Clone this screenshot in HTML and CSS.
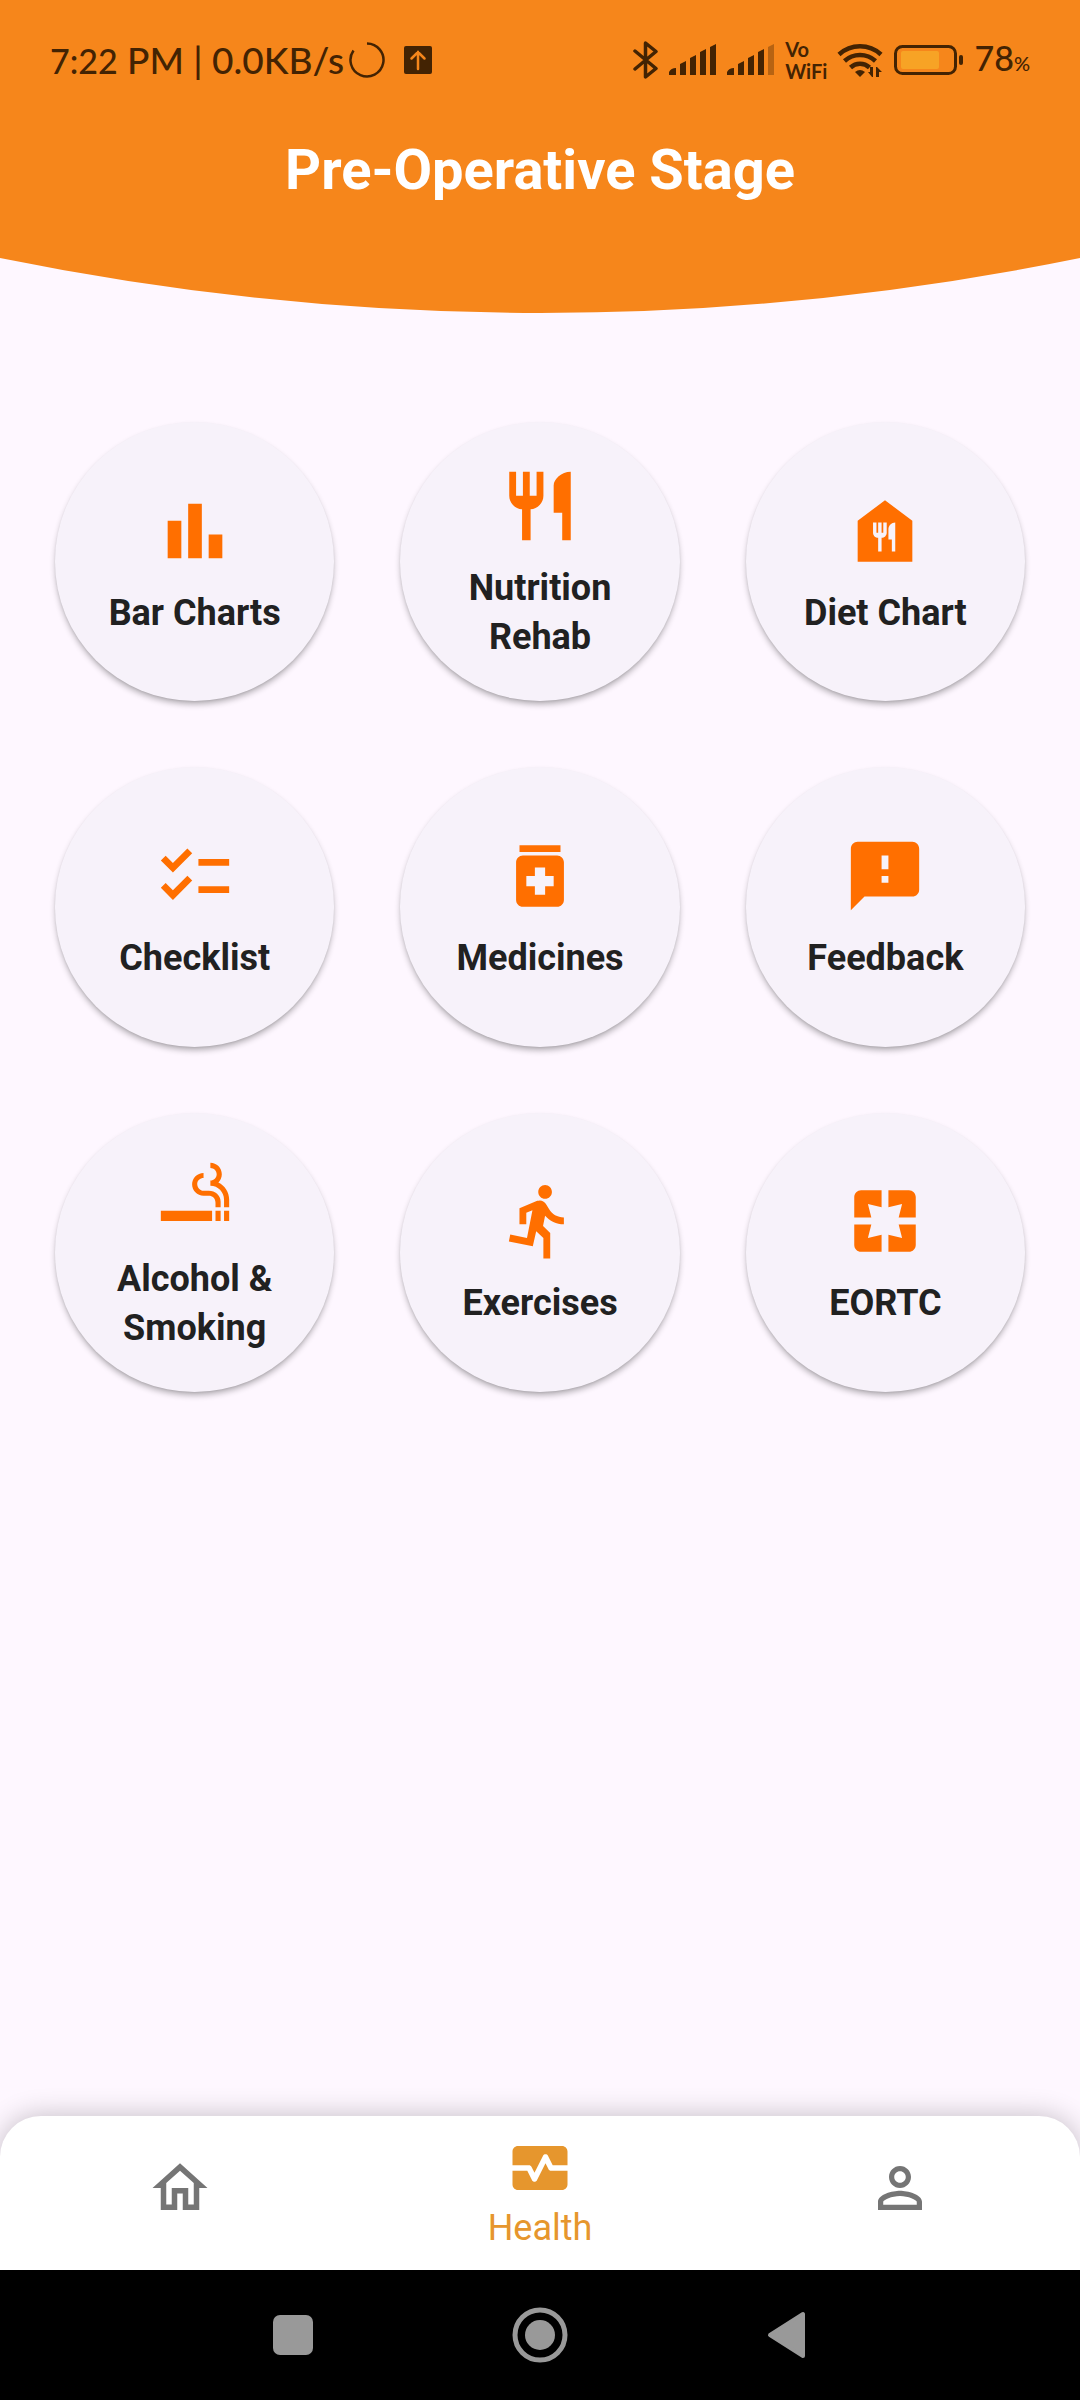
FILE: index.html
```html
<!DOCTYPE html>
<html lang="en">
<head>
<meta charset="utf-8">
<meta name="viewport" content="width=device-width, initial-scale=1">
<title>Pre-Operative Stage</title>
<link rel="stylesheet" href="styles.css">
</head>
<body>
<header class="header">
  <div class="status">
    <div class="status-group">
      <span class="clock"><span class="clock-time">7:22</span> PM | 0.0KB/s</span>
      <svg class="spinner" width="38" height="38" viewBox="0 0 38 38" aria-hidden="true"><path d="M19 2.5A16.5 16.5 0 1 1 5.5 9.5" fill="none" stroke="currentColor" stroke-width="2.5"/></svg>
      <svg class="upload" width="28" height="28" viewBox="0 0 28 28" aria-hidden="true"><rect width="28" height="28" rx="2" fill="currentColor"/><path d="M14 23V6M7.500 12.500 14 6l6.500 6.500" fill="none" stroke="#f6861b" stroke-width="2.500" stroke-linecap="round"/></svg>
    </div>
    <div class="status-group status-right">
      <svg width="26" height="40" viewBox="0 0 26 40" aria-hidden="true"><path d="M2 11l21 17.500L12.500 37V3L23 11.500 2 29" fill="none" stroke="currentColor" stroke-width="3.500" stroke-linejoin="round" stroke-linecap="round"/></svg>
      <svg class="signal" width="48" height="32" viewBox="0 0 48 32" aria-hidden="true"><g fill="currentColor"><path d="M0 31v-3q2-4 7-4v7zM11 31V20l6-3v14zM21 31V14l6-3v20zM31 31V8l6-3v26zM41 31V3l6-3v31z"/></g></svg>
      <svg class="signal" width="48" height="32" viewBox="0 0 48 32" aria-hidden="true"><g fill="currentColor"><path d="M0 31v-3q2-4 7-4v7zM11 31V20l6-3v14zM21 31V14l6-3v20zM31 31V8l6-3v26z"/><path d="M41 31V3l6-3v31z" opacity=".35"/></g></svg>
      <span class="vowifi"><span>Vo</span><span>WiFi</span></span>
      <svg class="wifi" width="47" height="36" viewBox="0 0 47 36" aria-hidden="true"><g fill="none" stroke="currentColor" stroke-width="4.500"><path d="M2 12.500a31 31 0 0 1 42 0M7.500 19a23 23 0 0 1 31 0M13.500 25.500a14 14 0 0 1 19 0"/></g><path d="M18 30q5-4 10 0l-5 5z" fill="currentColor"/><path d="M31 30h2v-5h3v10h-1zM39 35V25h1l5 5h-3v5z" fill="currentColor"/></svg>
      <svg class="battery" width="70" height="30" viewBox="0 0 70 30" aria-hidden="true"><rect x="1.500" y="1.500" width="60" height="27" rx="7" fill="none" stroke="currentColor" stroke-width="3"/><rect x="7" y="6" width="38" height="18" rx="2" fill="#f7a325"/><rect x="65" y="10" width="4" height="10" rx="2" fill="currentColor"/></svg>
      <span class="level">78<small>%</small></span>
    </div>
  </div>
  <h1 class="title">Pre-Operative Stage</h1>
</header>
<svg class="curve" viewBox="0 0 1080 55" preserveAspectRatio="none" aria-hidden="true"><path d="M0 0Q540 110 1080 0z" fill="#f6861b"/></svg>

<main class="grid">
  <button class="card" type="button">
    <svg class="icon" viewBox="0 0 24 24" aria-hidden="true"><path d="M4 9h4v11H4zm12 4h4v7h-4zm-6-9h4v16h-4z"/></svg>
    <span>Bar Charts</span>
  </button>
  <button class="card" type="button">
    <svg class="icon" viewBox="0 0 24 24" aria-hidden="true"><path d="M11 9H9V2H7v7H5V2H3v7c0 2.120 1.660 3.840 3.750 3.970V22h2.500v-9.030C11.340 12.840 13 11.120 13 9V2h-2v7zm5-3v8h2.500v8H21V2c-2.760 0-5 2.240-5 4z"/></svg>
    <span>Nutrition Rehab</span>
  </button>
  <button class="card" type="button">
    <svg class="icon" viewBox="0 0 24 24" aria-hidden="true"><path d="M12 3L4 9v12h16V9l-8-6zm.5 9.500c0 .83-.67 1.500-1.500 1.500v4h-1v-4c-.83 0-1.500-.67-1.500-1.500v-3h1v3h.5v-3h1v3h.5v-3h1v3zM15 18h-1v-3.500h-1v-3c0-1.100.9-2 2-2V18z"/></svg>
    <span>Diet Chart</span>
  </button>
  <button class="card" type="button">
    <svg class="icon" viewBox="0 0 24 24" aria-hidden="true"><path d="M22 7h-9v2h9V7zm0 8h-9v2h9v-2zM5.540 11L2 7.460l1.410-1.410 2.120 2.120 4.240-4.240 1.410 1.410L5.540 11zm0 8L2 15.460l1.410-1.410 2.120 2.120 4.240-4.240 1.410 1.410L5.540 19z"/></svg>
    <span>Checklist</span>
  </button>
  <button class="card" type="button">
    <svg class="icon" viewBox="0 0 24 24" aria-hidden="true"><path d="M6 3h12v2H6zm11 3H7c-1.100 0-2 .9-2 2v11c0 1.100.9 2 2 2h10c1.100 0 2-.9 2-2V8c0-1.100-.9-2-2-2zm-1 9h-2.500v2.500h-3V15H8v-3h2.500V9.500h3V12H16v3z"/></svg>
    <span>Medicines</span>
  </button>
  <button class="card" type="button">
    <svg class="icon" viewBox="0 0 24 24" aria-hidden="true"><path d="M20 2H4c-1.100 0-1.990.9-1.990 2L2 22l4-4h14c1.100 0 2-.9 2-2V4c0-1.100-.9-2-2-2zm-7 12h-2v-2h2v2zm0-4h-2V6h2v4z"/></svg>
    <span>Feedback</span>
  </button>
  <button class="card" type="button">
    <svg class="icon" viewBox="0 0 24 24" aria-hidden="true"><path d="M2 16h15v3H2zm18.500 0H22v3h-1.500zM18 16h1.500v3H18zm.85-8.270c.62-.61 1-1.450 1-2.380C19.850 3.500 18.350 2 16.500 2v1.500c1.020 0 1.850.83 1.850 1.850S17.520 7.200 16.500 7.200v1.500c2.240 0 4 1.830 4 4.070V15H22v-2.240c0-2.220-1.280-4.140-3.150-5.030zm-2.820 2.470H14.500c-1.020 0-1.850-.98-1.850-2s.83-1.750 1.850-1.750v-1.500c-1.850 0-3.350 1.500-3.350 3.350s1.500 3.350 3.350 3.350h1.530c1.050 0 1.970.74 1.970 2.050V15h1.500v-1.640c0-1.810-1.600-3.160-3.470-3.160z"/></svg>
    <span>Alcohol &amp; Smoking</span>
  </button>
  <button class="card" type="button">
    <svg class="icon" viewBox="0 0 24 24" aria-hidden="true"><path d="M13.490 5.480c1.100 0 2-.9 2-2s-.9-2-2-2-2 .9-2 2 .9 2 2 2zm-3.600 13.900l1-4.400 2.100 2v6h2v-7.500l-2.100-2 .6-3c1.300 1.500 3.300 2.500 5.500 2.500v-2c-1.900 0-3.500-1-4.300-2.400l-1-1.600c-.4-.6-1-1-1.700-1-.3 0-.5.1-.8.1l-5.200 2.200v4.700h2v-3.400l1.800-.7-1.600 8.100-4.900-1-.4 2 7 1.400z"/></svg>
    <span>Exercises</span>
  </button>
  <button class="card" type="button">
    <svg class="icon" viewBox="0 0 24 24" aria-hidden="true"><path d="M3 5v6h5L7 7l4 1V3H5c-1.100 0-2 .9-2 2zm5 8H3v6c0 1.100.9 2 2 2h6v-5l-4 1 1-4zm9 4l-4-1v5h6c1.100 0 2-.9 2-2v-6h-5l1 4zm2-14h-6v5l4-1-1 4h5V5c0-1.100-.9-2-2-2z"/></svg>
    <span>EORTC</span>
  </button>
</main>

<nav class="tabs" aria-label="Main">
  <a class="tab" href="#home" aria-label="Home">
    <svg class="tab-icon" viewBox="0 0 24 24" aria-hidden="true"><path d="M12 5.690l5 4.500V18h-2v-6H9v6H7v-7.810l5-4.500M12 3L2 12h3v8h6v-6h2v6h6v-8h3L12 3z"/></svg>
  </a>
  <a class="tab tab-active" href="#health" aria-current="page">
    <svg class="tab-icon" viewBox="0 0 24 24" aria-hidden="true"><path d="M15.110 12.450 14 10.240l-3.110 6.210c-.16.34-.51.55-.89.55s-.73-.21-.89-.55L7.380 13H2v5c0 1.100.9 2 2 2h16c1.100 0 2-.9 2-2v-5h-6c-.38 0-.73-.21-.89-.55zM20 4H4c-1.100 0-2 .9-2 2v5h6c.38 0 .73.21.89.55L10 13.760l3.110-6.210c.34-.68 1.450-.68 1.790 0L16.620 11H22V6c0-1.100-.9-2-2-2z"/></svg>
    <span>Health</span>
  </a>
  <a class="tab" href="#profile" aria-label="Profile">
    <svg class="tab-icon" viewBox="0 0 24 24" aria-hidden="true"><path d="M12 5.900c1.160 0 2.100.94 2.100 2.100s-.94 2.100-2.100 2.100S9.900 9.160 9.900 8s.94-2.100 2.100-2.100m0 9c2.970 0 6.100 1.460 6.100 2.100v1.100H5.900V17c0-.64 3.130-2.100 6.100-2.100M12 4C9.790 4 8 5.790 8 8s1.790 4 4 4 4-1.790 4-4-1.790-4-4-4zm0 9c-2.670 0-8 1.340-8 4v3h16v-3c0-2.660-5.330-4-8-4z"/></svg>
  </a>
</nav>

<div class="system">
  <button type="button" aria-label="Recent apps"><svg width="56" height="56" viewBox="0 0 56 56" aria-hidden="true"><rect x="8" y="8" width="40" height="40" rx="7"/></svg></button>
  <button type="button" aria-label="Home screen"><svg width="56" height="56" viewBox="0 0 56 56" aria-hidden="true"><circle cx="28" cy="28" r="15"/><circle cx="28" cy="28" r="25" fill="none" stroke="#999" stroke-width="5"/></svg></button>
  <button type="button" aria-label="Back"><svg width="56" height="56" viewBox="0 0 56 56" aria-hidden="true"><path d="M11 28 44 7v42z" stroke="#999" stroke-width="4" stroke-linejoin="round"/></svg></button>
</div>
</body>
</html>
```
FILE: styles.css
```css
* {
  box-sizing: border-box;
}

body {
  display: flex;
  flex-direction: column;
  min-height: 100vh;
  margin: 0;
  background: #fef7ff;
  color: #212121;
  font-family: Roboto, "Liberation Sans", sans-serif;
}

button {
  border: 0;
  padding: 0;
  background: none;
  color: inherit;
  font: inherit;
}

svg {
  display: block;
  flex: none;
}

/* Header */
.header {
  padding-bottom: 38px;
  background: #f6861b;
}

.status {
  display: flex;
  align-items: center;
  justify-content: space-between;
  height: 120px;
  padding: 0 50px;
  color: #432303;
  font-family: Lato, sans-serif;
  font-weight: 500;
}

.status-group {
  display: flex;
  align-items: center;
}

.status-right {
  gap: 10px;
}

.clock {
  font-size: 37px;
  line-height: 48px;
  white-space: nowrap;
}

.clock-time {
  font-size: 34px;
}

.spinner {
  margin-left: 4px;
}

.upload {
  margin-left: 18px;
}

.vowifi {
  display: flex;
  flex-direction: column;
  font-size: 20px;
  font-weight: 700;
  line-height: 22px;
}

.level {
  font-size: 34px;
  line-height: 48px;
}

.level small {
  font-size: 20px;
}

.title {
  margin: 0;
  color: #fff;
  font-size: 56px;
  font-weight: 700;
  line-height: 100px;
  text-align: center;
}

.curve {
  width: 100%;
  height: 55px;
}

/* Round menu cards */
.grid {
  display: grid;
  flex: 1;
  grid-template-columns: repeat(3, 1fr);
  align-content: start;
  gap: 66px;
  padding: 109px 55px 66px;
}

.card {
  display: flex;
  flex-direction: column;
  align-items: center;
  justify-content: center;
  gap: 17px;
  aspect-ratio: 1;
  padding: 4px 33px 0;
  border-radius: 50%;
  background: #f7f2fa;
  box-shadow: 0 4px 6px -1px rgba(0, 0, 0, 0.32), 0 1px 2px rgba(0, 0, 0, 0.06);
  font-size: 36px;
  font-weight: 700;
  line-height: 49px;
  text-align: center;
}

.icon {
  width: 82px;
  height: 82px;
  fill: #ff6f00;
}

/* Bottom navigation */
.tabs {
  display: grid;
  grid-template-columns: repeat(3, 1fr);
  height: 154px;
  border-radius: 41px 41px 0 0;
  background: #fff;
  box-shadow: 0 0 28px rgba(0, 0, 0, 0.24);
}

.tab {
  display: flex;
  flex-direction: column;
  align-items: center;
  justify-content: center;
  gap: 6px;
  padding-bottom: 10px;
  color: #757575;
  font-size: 36px;
  line-height: 42px;
  text-decoration: none;
}

.tab-active {
  padding-bottom: 2px;
  color: #e6962d;
}

.tab-icon {
  width: 66px;
  height: 66px;
  fill: currentColor;
}

/* System navigation */
.system {
  position: relative;
  display: grid;
  grid-template-columns: repeat(3, 1fr);
  height: 130px;
  padding: 0 170px;
  background: #000;
}

.system button {
  display: flex;
  align-items: center;
  justify-content: center;
}

.system svg {
  fill: #999;
}
```
